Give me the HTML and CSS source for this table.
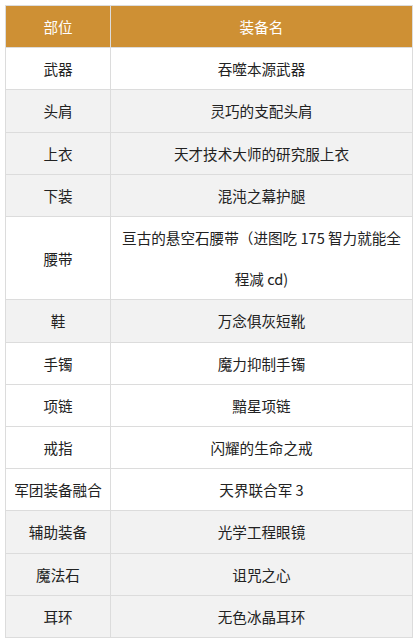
FILE: index.html
```html
<!DOCTYPE html>
<html lang="zh-CN">
<head>
<meta charset="utf-8">
<title>装备</title>
<link rel="stylesheet" href="styles.css">
</head>
<body>
<table class="gear">
  <colgroup><col class="c-slot"><col class="c-name"></colgroup>
  <thead>
    <tr><th>部位</th><th>装备名</th></tr>
  </thead>
  <tbody>
    <tr><td>武器</td><td>吞噬本源武器</td></tr>
    <tr class="alt"><td>头肩</td><td>灵巧的支配头肩</td></tr>
    <tr class="alt"><td>上衣</td><td>天才技术大师的研究服上衣</td></tr>
    <tr class="alt"><td>下装</td><td>混沌之幕护腿</td></tr>
    <tr><td>腰带</td><td>亘古的悬空石腰带（进图吃 175 智力就能全程减 cd)</td></tr>
    <tr class="alt"><td>鞋</td><td>万念俱灰短靴</td></tr>
    <tr><td>手镯</td><td>魔力抑制手镯</td></tr>
    <tr><td>项链</td><td>黯星项链</td></tr>
    <tr><td>戒指</td><td>闪耀的生命之戒</td></tr>
    <tr><td>军团装备融合</td><td>天界联合军 3</td></tr>
    <tr class="alt"><td>辅助装备</td><td>光学工程眼镜</td></tr>
    <tr class="alt"><td>魔法石</td><td>诅咒之心</td></tr>
    <tr class="alt"><td>耳环</td><td>无色冰晶耳环</td></tr>
  </tbody>
</table>
</body>
</html>
```
FILE: styles.css
```css
html, body {
  margin: 0;
  padding: 0;
  background: #ffffff;
}
body {
  padding: 5px;
  font-family: "Noto Sans CJK SC", "Noto Sans", sans-serif;
  font-size: 14.6px;
  color: #222222;
}
.gear {
  border-collapse: collapse;
  width: 408px;
  table-layout: fixed;
}
.c-slot { width: 105px; }
.gear th,
.gear td {
  border: 1px solid #dcdcdc;
  text-align: center;
  vertical-align: middle;
  line-height: 41.2px;
  padding: 0 8px;
  font-weight: normal;
}
.gear th {
  background: #ce9034;
  color: #ffffff;
  border-color: #dcdcdc;
}
.gear tr.alt td {
  background: #f2f2f2;
}
```
